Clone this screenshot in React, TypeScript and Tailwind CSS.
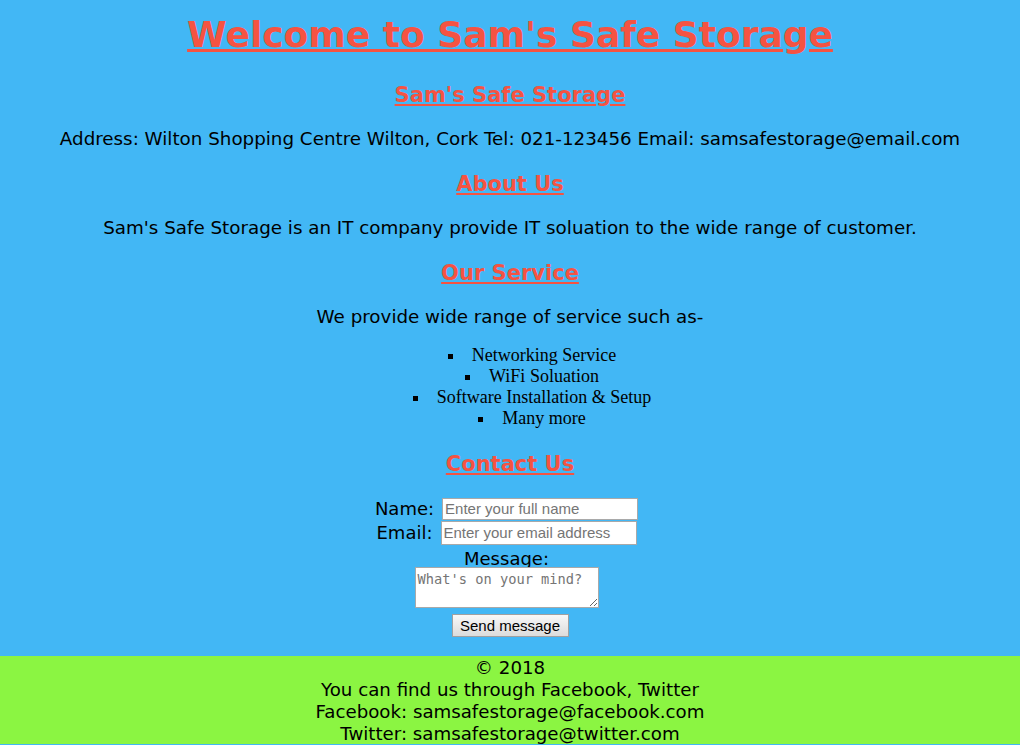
import React from 'react';

const services = ['Networking Service', 'WiFi Soluation', 'Software Installation & Setup', 'Many more'];

const Heading: React.FC<{ children: React.ReactNode; className?: string }> = ({ children, className }) => (
  <h2 className={`text-[21px] leading-[28px] font-bold underline text-[#f55342] ${className ?? ''}`}>{children}</h2>
);

const App: React.FC = () => {
  return (
    <div
      className="min-h-screen bg-[#42b7f5] text-black text-center"
      style={{ fontFamily: '"DejaVu Sans", Verdana, sans-serif' }}
    >
      <div className="pt-[13px] pb-[19px]">
        <h1 className="text-[36px] leading-[44px] font-bold underline text-[#f55342]">
          Welcome to Sam's Safe Storage
        </h1>

        <Heading className="mt-[24px]">Sam's Safe Storage</Heading>
        <p className="mt-[18px] text-[18.3px] leading-[24px]">
          Address: Wilton Shopping Centre Wilton, Cork Tel: 021-123456 Email: samsafestorage@email.com
        </p>

        <Heading className="mt-[19px]">About Us</Heading>
        <p className="mt-[18px] text-[18.3px] leading-[24px]">
          Sam's Safe Storage is an IT company provide IT soluation to the wide range of customer.
        </p>

        <Heading className="mt-[19px]">Our Service</Heading>
        <p className="mt-[18px] text-[18.3px] leading-[24px]">We provide wide range of service such as-</p>
        <ul
          className="mt-[16px] pl-[44px] list-[square] list-inside text-[18px] leading-[21px]"
          style={{ fontFamily: '"Liberation Serif", serif' }}
        >
          {services.map((s) => (
            <li key={s}>{s}</li>
          ))}
        </ul>

        <Heading className="mt-[21px]">Contact Us</Heading>
        <form
          className="mt-[19px] flex flex-col items-center text-[18px] leading-[24px]"
          onSubmit={(e) => e.preventDefault()}
        >
          <div className="flex items-center h-[24px] pr-[7px]">
            <label htmlFor="name" className="mr-[8px]">Name:</label>
            <input
              id="name"
              type="text"
              placeholder="Enter your full name"
              className="w-[196px] h-[22px] bg-white border border-[#a9a9a9] px-[2px] text-[15px] placeholder:text-[#757575]"
              style={{ fontFamily: '"Liberation Sans", Arial, sans-serif' }}
            />
          </div>
          <div className="flex items-center h-[24px] pr-[7px]">
            <label htmlFor="email" className="mr-[8px]">Email:</label>
            <input
              id="email"
              type="email"
              placeholder="Enter your email address"
              className="w-[196px] h-[24px] bg-white border border-[#a9a9a9] px-[2px] text-[15px] placeholder:text-[#757575]"
              style={{ fontFamily: '"Liberation Sans", Arial, sans-serif' }}
            />
          </div>
          <label htmlFor="msg" className="block h-[22px] pt-[3px] leading-[22px] pr-[7px]">Message:</label>
          <textarea
            id="msg"
            placeholder="What's on your mind?"
            className="mr-[7px] w-[184px] h-[41px] bg-white border border-[#a9a9a9] px-[2px] pt-[3px] pb-0 text-[13.7px] leading-[16px] placeholder:text-[#757575] resize-y"
            style={{ fontFamily: '"DejaVu Sans Mono", monospace' }}
          />
          <button
            type="submit"
            className="mt-[6px] w-[117px] h-[23px] border border-[#a0a0a0] bg-gradient-to-b from-[#f8f8f8] to-[#dcdcdc] text-[15px] leading-[18px]"
            style={{ fontFamily: '"Liberation Sans", Arial, sans-serif' }}
          >
            Send message
          </button>
        </form>
      </div>

      <footer className="bg-[#8bf542] h-[88px] pt-[1px] text-[18.2px] leading-[22px]">
        <p>© 2018</p>
        <p>You can find us through Facebook, Twitter</p>
        <p>Facebook: samsafestorage@facebook.com</p>
        <p>Twitter: samsafestorage@twitter.com</p>
      </footer>
    </div>
  );
};

export default App;
